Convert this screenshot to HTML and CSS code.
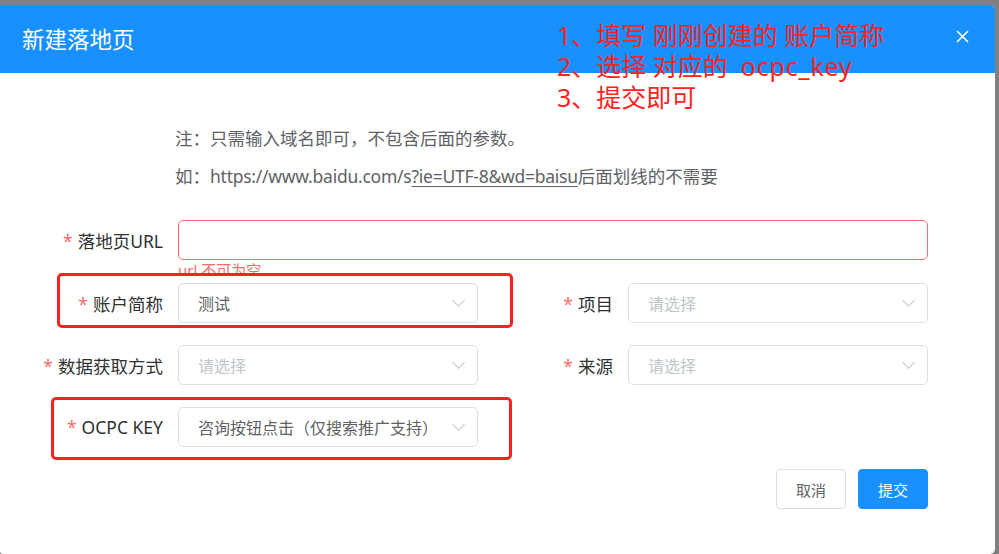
FILE: index.html
```html
<!DOCTYPE html>
<html lang="zh-CN">
<head>
    <meta charset="UTF-8">
    <meta name="viewport" content="width=device-width, initial-scale=1.0">
    <title>新建落地页</title>
    <link rel="stylesheet" href="styles.css">
</head>
<body>
    <div class="dialog">
        <div class="dialog-header">
            <div class="dialog-title">新建落地页</div>
            <button class="dialog-close" aria-label="close">
                <svg width="13" height="13" viewBox="0 0 13 13"><path d="M1 1 L12 12 M12 1 L1 12" stroke="#fff" stroke-width="1.6" fill="none"/></svg>
            </button>
        </div>

        <div class="dialog-body">
            <div class="tips">
                <p>注：只需输入域名即可，不包含后面的参数。</p>
                <p>如：<span class="url">https://www.baidu.com/s<u>?ie=UTF-8&amp;wd=baisu</u></span>后面划线的不需要</p>
            </div>

            <div class="form">
                <div class="form-row first">
                    <div class="form-item wide">
                        <label class="form-label"><span class="req">*</span>落地页URL</label>
                        <div class="form-content">
                            <div class="input is-error"></div>
                            <div class="form-error">url 不可为空</div>
                        </div>
                    </div>
                </div>

                <div class="form-row">
                    <div class="form-item">
                        <label class="form-label"><span class="req">*</span>账户简称</label>
                        <div class="form-content">
                            <div class="select"><span class="value">测试</span><span class="arrow"></span></div>
                        </div>
                    </div>
                    <div class="form-item">
                        <label class="form-label"><span class="req">*</span>项目</label>
                        <div class="form-content">
                            <div class="select"><span class="placeholder">请选择</span><span class="arrow"></span></div>
                        </div>
                    </div>
                </div>

                <div class="form-row">
                    <div class="form-item">
                        <label class="form-label"><span class="req">*</span>数据获取方式</label>
                        <div class="form-content">
                            <div class="select"><span class="placeholder">请选择</span><span class="arrow"></span></div>
                        </div>
                    </div>
                    <div class="form-item">
                        <label class="form-label"><span class="req">*</span>来源</label>
                        <div class="form-content">
                            <div class="select"><span class="placeholder">请选择</span><span class="arrow"></span></div>
                        </div>
                    </div>
                </div>

                <div class="form-row">
                    <div class="form-item">
                        <label class="form-label"><span class="req">*</span>OCPC KEY</label>
                        <div class="form-content">
                            <div class="select"><span class="value">咨询按钮点击（仅搜索推广支持）</span><span class="arrow"></span></div>
                        </div>
                    </div>
                </div>
            </div>

            <div class="dialog-footer">
                <button class="btn">取消</button>
                <button class="btn primary">提交</button>
            </div>
        </div>

        <!-- annotations drawn on top of the screenshot -->
        <div class="note">
            <div>1、填写 刚刚创建的 账户简称</div>
            <div>2、选择 对应的&nbsp;&nbsp;<span class="latin">ocpc_key</span></div>
            <div>3、提交即可</div>
        </div>
        <div class="mark mark-account"></div>
        <div class="mark mark-ocpc"></div>
    </div>
</body>
</html>
```

FILE: styles.css
```css
* {
    margin: 0;
    padding: 0;
    box-sizing: border-box;
}

body {
    background: #808080;
    font-family: "Noto Sans", "Noto Sans CJK SC", sans-serif;
    width: 999px;
    height: 554px;
    overflow: hidden;
    padding-top: 5px;
}

.dialog {
    position: relative;
    width: 995px;
    height: 549px;
    background: #fff;
    border-radius: 0 5px 5px 3px;
    overflow: hidden;
}

.dialog-header {
    height: 68px;
    background: #1890ff;
    display: flex;
    align-items: center;
    justify-content: space-between;
    padding: 0 26px 0 22px;
}

.dialog-title {
    color: #fff;
    font-size: 22.5px;
    font-family: "Noto Sans CJK SC", sans-serif;
    margin-top: -2px;
}

.dialog-close {
    background: none;
    border: none;
    width: 13px;
    height: 13px;
    display: flex;
    margin-top: -5px;
}

.dialog-body {
    padding: 0 0 0 28px;
}

.tips {
    padding: 46px 0 0 147px;
    color: #606266;
    font-size: 17.5px;
}

.tips p {
    height: 38px;
    line-height: 38px;
}

.tips .url {
    letter-spacing: -0.25px;
}

.tips u {
    text-decoration-thickness: 1px;
    text-underline-offset: 3px;
}

.form {
    margin-top: 25px;
    width: 900px;
}

.form-row {
    display: flex;
    margin-bottom: 22px;
}

.form-row.first {
    margin-bottom: 23px;
}

.form-item {
    width: 450px;
    display: flex;
    align-items: center;
}

.form-item.wide {
    width: 900px;
}

.form-label {
    width: 150px;
    padding-right: 15px;
    text-align: right;
    font-size: 17.5px;
    color: #303133;
    white-space: nowrap;
}

.req {
    color: #f56c6c;
    margin-right: 5px;
}

.form-content {
    position: relative;
    flex: 1;
}

.input {
    height: 40px;
    border: 1px solid #dcdfe6;
    border-radius: 5px;
}

.input.is-error {
    border-color: #f56c6c;
}

.form-error {
    position: absolute;
    top: 100%;
    left: 0;
    height: 13px;
    overflow: hidden;
    padding-top: 3px;
    font-size: 15px;
    line-height: 15px;
    color: #f56c6c;
}

.select {
    height: 40px;
    border: 1px solid #dcdfe6;
    border-radius: 5px;
    display: flex;
    align-items: center;
    justify-content: space-between;
    padding: 0 14px 0 19px;
    font-size: 16px;
}

.select .value {
    color: #606266;
}

.select .placeholder {
    color: #c0c4cc;
}

.arrow {
    width: 9px;
    height: 9px;
    border-right: 1.5px solid #c0c4cc;
    border-bottom: 1.5px solid #c0c4cc;
    transform: rotate(45deg);
    margin-top: -5px;
}

.dialog-footer {
    width: 900px;
    display: flex;
    justify-content: flex-end;
    gap: 12px;
    margin-top: 2px;
}

.btn {
    width: 70px;
    height: 40px;
    border: 1px solid #dcdfe6;
    border-radius: 4px;
    background: #fff;
    color: #606266;
    font-size: 15px;
    font-family: "Noto Sans CJK SC", sans-serif;
}

.btn.primary {
    background: #1890ff;
    border-color: #1890ff;
    color: #fff;
}

.note {
    position: absolute;
    left: 557px;
    top: 15px;
    color: #ff2222;
    font-size: 25px;
    line-height: 31px;
    font-family: "Noto Sans", "Noto Sans CJK SC", sans-serif;
}

.note .latin {
    letter-spacing: 0.8px;
}

.mark {
    position: absolute;
    border: 3px solid #ff2020;
    border-radius: 5px;
}

.mark-account {
    left: 57px;
    top: 268px;
    width: 456px;
    height: 55px;
}

.mark-ocpc {
    left: 51px;
    top: 392px;
    width: 461px;
    height: 63px;
}
```
